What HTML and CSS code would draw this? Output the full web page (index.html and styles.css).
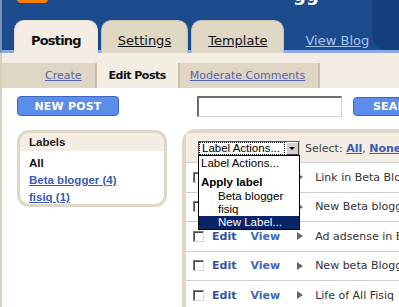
FILE: index.html
```html
<!DOCTYPE html>
<html lang="en">

<head>
    <meta charset="UTF-8">
    <title>Blogger - Edit Posts</title>
    <link rel="stylesheet" href="styles.css">
</head>

<body>
    <div id="page">
        <header id="top">
            <div class="logo"></div>
            <div class="brand">gg</div>
            <div class="corner"></div>
            <nav class="tabs">
                <span class="tab active">Posting</span>
                <a class="tab" href="#">Settings</a>
                <a class="tab" href="#">Template</a>
                <a class="view-blog" href="#">View Blog</a>
            </nav>
        </header>
        <div id="subnav">
            <a class="sub first" href="#">Create</a>
            <span class="sub current">Edit Posts</span>
            <a class="sub" href="#">Moderate Comments</a>
        </div>
        <div id="main">
            <div class="side">
                <button class="blue-btn new-post">NEW POST</button>
                <div class="labels">
                    <div class="labels-head">Labels</div>
                    <ul class="labels-list">
                        <li class="all">All</li>
                        <li><a href="#">Beta blogger (4)</a></li>
                        <li><a href="#">fisiq (1)</a></li>
                    </ul>
                </div>
            </div>
            <div class="posts-col">
                <div class="search">
                    <input type="text" class="search-box">
                    <button class="blue-btn search-btn">SEARCH POSTS</button>
                </div>
                <div class="posts">
                    <div class="posts-head">
                        <div class="fake-select">
                            <span class="sel-text">Label Actions...</span>
                            <span class="sel-btn"></span>
                        </div>
                        <ul class="dropdown">
                            <li>Label Actions...</li>
                            <li class="group">Apply label</li>
                            <li class="opt">Beta blogger</li>
                            <li class="opt">fisiq</li>
                            <li class="opt sel">New Label...</li>
                        </ul>
                        <span class="select-links">Select: <a href="#">All</a>, <a href="#">None</a></span>
                    </div>
                    <div id="post-rows"></div>
                </div>
            </div>
        </div>
    </div>
    <script>
        // 投稿一覧
        var posts = [
            'Link in Beta Blogger',
            'New Beta blogger',
            'Ad adsense in Beta Blogger',
            'New beta Blogger',
            'Life of All Fisiq'
        ];
        var rows = document.getElementById('post-rows');
        posts.forEach(function (title) {
            var row = document.createElement('div');
            row.className = 'row';
            row.innerHTML = '<span class="cb"></span>' +
                '<a class="edit" href="#">Edit</a>' +
                '<a class="view" href="#">View</a>' +
                '<span class="tri"></span>' +
                '<span class="title">' + title + '</span>';
            rows.appendChild(row);
        });
    </script>
</body>

</html>
```

FILE: styles.css
```css
body {
    margin: 0;
    background: #fff;
    font-family: "DejaVu Sans", Verdana, sans-serif;
    font-size: 11px;
    color: #333;
    overflow: hidden;
}

#page {
    width: 620px;
}

/* header */
#top {
    position: relative;
    height: 53px;
    box-sizing: border-box;
    padding-left: 12px;
    border-left: 2px solid #7d90b8;
    background: linear-gradient(to bottom, #1b4a8d 0, #1b4a8d 50px, #88aae6 50px);
    display: flex;
    align-items: flex-end;
    overflow: hidden;
}

.logo {
    position: absolute;
    left: 15px;
    top: -6px;
    width: 31px;
    height: 9px;
    background: #f57f00;
    border-radius: 4px;
}

.brand {
    position: absolute;
    left: 291px;
    top: -14px;
    font-size: 18px;
    line-height: 18px;
    font-weight: bold;
    color: #fff;
}

.corner {
    position: absolute;
    left: 370px;
    top: -20px;
    width: 300px;
    height: 70px;
    background: #143f7f;
    border-radius: 16px;
}

.tabs {
    position: relative;
    display: flex;
    align-items: flex-end;
    gap: 3px;
}

.tab {
    display: block;
    height: 33px;
    box-sizing: border-box;
    padding: 11px 16px 0;
    font-size: 13px;
    line-height: 18px;
    color: #111;
    background: #e1d7c5;
    border: 1px solid #cbbfa8;
    border-bottom: 0;
    border-radius: 10px 10px 0 0;
}

.tab.active {
    background: #f3ede4;
    border-color: #e9e0d0;
    font-weight: bold;
    letter-spacing: -0.8px;
}

.view-blog {
    margin: 0 0 3px 18px;
    font-size: 13px;
    line-height: 18px;
    color: #a6c4f2;
}

/* sub navigation */
#subnav {
    display: flex;
    padding-top: 10px;
    background: #f3ede4;
    border-left: 2px solid #d8cfbf;
}

.sub {
    height: 25px;
    line-height: 25px;
    padding: 0 13px 0 10px;
    background: #e0d6c5;
    border-right: 2px solid #cabfa9;
    color: #5263ab;
}

.sub.first {
    padding: 0 13px 0 43px;
}

.sub.current {
    padding: 0 12px 0 12px;
    background: #f3ede4;
    color: #111;
    font-weight: bold;
    letter-spacing: -0.5px;
}

/* main */
#main {
    display: flex;
    gap: 15px;
    padding: 8px 0 0 15px;
    min-height: 230px;
    border-left: 2px solid #d8cfbf;
}

.side {
    width: 150px;
    flex: none;
}

.blue-btn {
    display: block;
    height: 20px;
    box-sizing: border-box;
    margin: 0;
    padding: 0;
    background: #5b8de9;
    border: 1px solid #3b67c0;
    border-radius: 4px;
    color: #fff;
    font-family: "DejaVu Sans", Verdana, sans-serif;
    font-size: 11px;
    font-weight: bold;
    letter-spacing: 0.2px;
}

.new-post {
    width: 102px;
}

.labels {
    margin-top: 14px;
    border: 3px solid #e0d6c5;
    border-radius: 12px;
    overflow: hidden;
    font-family: "Liberation Sans", Arial, sans-serif;
    font-size: 11.5px;
    font-weight: bold;
}

.labels-head {
    height: 18px;
    line-height: 18px;
    padding-left: 9px;
    background: #f3ede4;
    color: #222;
}

.labels-list {
    list-style: none;
    margin: 0;
    padding: 4px 9px 0;
    height: 49px;
    line-height: 17px;
}

.labels-list .all {
    color: #111;
}

.labels-list a {
    color: #3a5bb3;
}

.posts-col {
    flex: 1;
}

.search {
    display: flex;
    gap: 11px;
    padding-left: 15px;
}

.search-box {
    width: 145px;
    height: 21px;
    box-sizing: border-box;
    margin: 0;
    padding: 0;
    background: #fff;
    border-style: solid;
    border-width: 2px 1px 1px 2px;
    border-color: #6e6e6e #d0d0d0 #d0d0d0 #6e6e6e;
}

.search-btn {
    margin-top: 1px;
    height: 19px;
    padding: 0 19px;
}

.posts {
    margin-top: 12px;
    border: 4px solid #e0d6c5;
    border-right: 0;
    border-bottom: 0;
    border-radius: 14px 0 0 0;
}

.posts-head {
    position: relative;
    height: 29px;
    box-sizing: border-box;
    padding: 8px 0 0 12px;
    display: flex;
    align-items: flex-start;
    gap: 5px;
    background: #f3ede4;
}

.fake-select {
    display: flex;
    width: 102px;
    height: 15px;
    box-sizing: border-box;
    background: #fff;
    border: 1px solid;
    border-color: #5a5a5a #c8c8c8 #c8c8c8 #5a5a5a;
    font-family: "Liberation Sans", Arial, sans-serif;
    font-size: 11.5px;
    color: #000;
}

.sel-text {
    flex: 1;
    margin: 1px 2px 1px 1px;
    padding-left: 2px;
    line-height: 11px;
    outline: 1px dotted #000;
    white-space: nowrap;
    overflow: hidden;
}

.sel-btn {
    position: relative;
    width: 13px;
    box-sizing: border-box;
    background: #d4d0c8;
    border: 1px solid;
    border-color: #fff #404040 #404040 #fff;
}

.sel-btn::after {
    content: "";
    position: absolute;
    left: 2px;
    top: 4px;
    border-top: 3px solid #000;
    border-left: 3.5px solid transparent;
    border-right: 3.5px solid transparent;
}

.dropdown {
    position: absolute;
    left: 12px;
    top: 22px;
    z-index: 5;
    width: 102px;
    box-sizing: border-box;
    margin: 0;
    padding: 0;
    list-style: none;
    background: #fff;
    border: 1px solid #000;
    font-family: "Liberation Sans", Arial, sans-serif;
    font-size: 11.5px;
    color: #000;
}

.dropdown li {
    height: 15px;
    line-height: 15px;
    padding-left: 2px;
}

.dropdown .group {
    height: 19px;
    padding-top: 4px;
    box-sizing: border-box;
    font-weight: bold;
}

.dropdown .opt {
    height: 13px;
    line-height: 13px;
    padding-left: 19px;
}

.dropdown .sel {
    background: #0a246a;
    color: #fff;
}

.select-links {
    line-height: 15px;
    color: #444;
    white-space: nowrap;
}

.select-links a {
    color: #3a5bb3;
    font-weight: bold;
}

/* post rows */
.row {
    display: flex;
    align-items: center;
    height: 29.5px;
    box-sizing: border-box;
    padding-left: 7px;
    border-top: 1px solid #cdcdcd;
    white-space: nowrap;
}

.cb {
    width: 11px;
    height: 11px;
    box-sizing: border-box;
    margin-right: 8px;
    background: #fff;
    border: 1px solid;
    border-color: #7a7a7a #d8d8d8 #d8d8d8 #7a7a7a;
    box-shadow: inset 1px 1px 0 #4a4a4a;
}

.edit,
.view {
    font-weight: bold;
    text-decoration: none;
}

.edit {
    margin-right: 14px;
    color: #34529f;
}

.view {
    margin-right: 17px;
    color: #4169b8;
}

.tri {
    margin-right: 12px;
    border-left: 6px solid #666;
    border-top: 4px solid transparent;
    border-bottom: 4px solid transparent;
}

.title {
    color: #333;
}
```
